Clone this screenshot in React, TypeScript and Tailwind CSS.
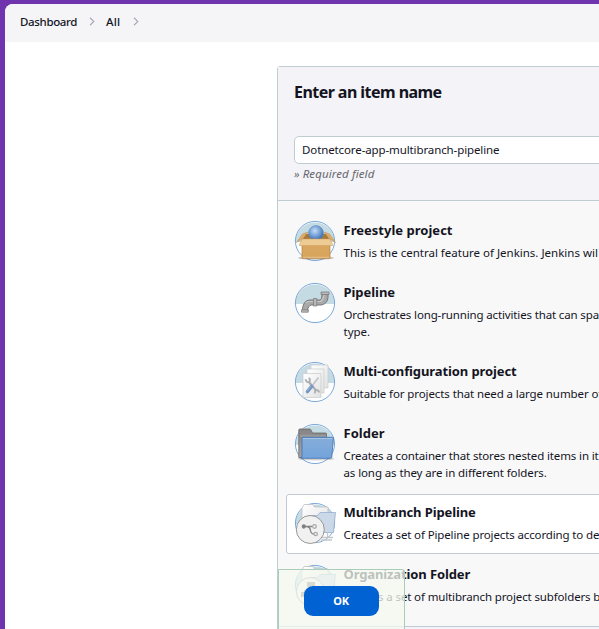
import React from "react";

function Disc({ id, children }: { id: string; children: React.ReactNode }) {
  return (
    <svg viewBox="0 0 40 40" className="size-10 shrink-0 overflow-visible">
      <defs>
        <linearGradient id={id + "box"} x1="0" y1="0" x2="0" y2="1">
          <stop offset="0" stopColor="#d9a762" />
          <stop offset="1" stopColor="#d9a55c" />
        </linearGradient>
        <radialGradient id={id + "ball"} cx=".42" cy=".35" r=".65">
          <stop offset="0" stopColor="#c5dcf5" />
          <stop offset=".5" stopColor="#7ba6da" />
          <stop offset="1" stopColor="#3d6cae" />
        </radialGradient>
        <linearGradient id={id + "blue"} x1="0" y1="0" x2="0" y2="1">
          <stop offset="0" stopColor="#86add9" />
          <stop offset="1" stopColor="#73a4dc" />
        </linearGradient>
        <linearGradient id={id + "grey"} x1="0" y1="0" x2="1" y2="1">
          <stop offset="0" stopColor="#ffffff" />
          <stop offset="1" stopColor="#e2e2e2" />
        </linearGradient>
        <linearGradient id={id + "dark"} x1="0" y1="0" x2="0" y2="1">
          <stop offset="0" stopColor="#858585" />
          <stop offset="1" stopColor="#a5a5a5" />
        </linearGradient>
      </defs>
      <circle cx="20" cy="20" r="19.6" fill="#fff" />
      <path d="M.4 21A19.6 19.6 0 1 1 39.6 21Z" fill="#c5dbe4" />
      <circle cx="20" cy="20" r="19.6" fill="none" stroke="#6d9fd5" strokeWidth=".9" />
      {children}
    </svg>
  );
}

function Freestyle() {
  return (
    <Disc id="f">
      <ellipse cx="21" cy="37" rx="18" ry="1.8" fill="#555" opacity=".3" />
      <path d="M7 19L11 13H31L35 19Z" fill="#a87838" />
      <path d="M7 18L13 11L7.500 13L1.500 21.500Z" fill="#dfac66" stroke="#c08c48" strokeWidth=".5" />
      <path d="M35 18L29 11L34.500 13L40.500 21.500Z" fill="#dfac66" stroke="#c08c48" strokeWidth=".5" />
      <circle cx="21" cy="12" r="7.5" fill="url(#fball)" stroke="#5a86bf" strokeWidth=".5" />
      <path d="M7 18.500H35V37.300H7Z" fill="url(#fbox)" stroke="#b88039" strokeWidth=".7" />
      <path d="M8 36.300H34" stroke="#efcf9c" strokeWidth=".7" />
      <path d="M7 18H35L38 24.500H4Z" fill="#efcb94" stroke="#cd9d5e" strokeWidth=".5" />
    </Disc>
  );
}

function Pipe() {
  return (
    <Disc id="p">
      <path d="M7.500 28V25.500Q8.500 17.500 14.500 17H25Q27 16.500 27 12V10.500H33V14.500Q32.500 20.500 26.500 22H16.500Q13 22.500 12.500 28Z" fill="#a9a9a9" stroke="#6e6e6e" strokeWidth=".9" />
      <path d="M11 19.500Q12.500 18.500 15 18.500H25Q28.500 17.500 28.800 12" fill="none" stroke="#c9c9c9" strokeWidth="1.200" />
      <path d="M18.500 15.500H21.800V23H18.500Z M26 9H34V11.500H26Z M6.500 26.800H13.300V29.200H6.500Z" fill="#b9b9b9" stroke="#747474" strokeWidth=".7" />
    </Disc>
  );
}

function Multi() {
  return (
    <Disc id="m">
      <g stroke="#c7cccd" strokeWidth=".7">
        <path d="M16 3H33V26H16Z" fill="url(#mgrey)" />
        <path d="M12 7H29V31H12Z" fill="url(#mgrey)" />
        <path d="M8 11.500H26V35.500H8Z" fill="url(#mgrey)" />
      </g>
      <path d="M13.500 19.500L21.500 29" stroke="#adb1b4" strokeWidth="2.4" />
      <path d="M10.500 17.200Q11.500 21 14 20Q16 18.500 14 15.800M20 31.500Q19.500 28 21.500 28Q23.500 28 24.300 30.500" fill="none" stroke="#adb1b4" strokeWidth="1.800" />
      <path d="M23.500 15.500L17 24" stroke="#c0c4c8" strokeWidth="1.700" />
      <path d="M16.500 24.500L12.500 29.500" stroke="#7396c6" strokeWidth="3.600" strokeLinecap="round" />
      <path d="M16 24L12 29" stroke="#a1bbdd" strokeWidth=".8" />
    </Disc>
  );
}

function FolderIcon() {
  return (
    <Disc id="d">
      <ellipse cx="21" cy="34.800" rx="18" ry="1.700" fill="#444" opacity=".25" />
      <path d="M3.800 33.500V6Q3.800 5 4.800 5H14.500Q15.500 5 16 6L17.500 9H30.500Q31.500 9 31.500 10V33.500Z" fill="url(#ddark)" stroke="#686868" strokeWidth=".8" />
      <path d="M5 12H31" stroke="#b4b4b4" strokeWidth=".7" />
      <path d="M7 14.300Q7 13.300 8 13.300H37.500Q38.500 13.300 38.400 14.300L36.800 33Q36.600 34.300 35.300 34.300H5.800Q7 33.800 7 32Z" fill="url(#dblue)" stroke="#3e70ae" strokeWidth=".8" />
      <path d="M8 14.500H37.300" stroke="#b4cfec" strokeWidth=".7" />
    </Disc>
  );
}

function Branch({ org = false }: { org?: boolean }) {
  const id = org ? "o" : "b";
  return (
    <Disc id={id}>
      <path d="M7 25V5L9 1.500H18L19.500 4H33V25Z" fill="url(#bgrey)" stroke="#babcbd" strokeWidth=".7" />
      <path d="M14 12.500H22.500L25 9.500H40.500L38.500 29.500H14Z" fill="#cbd8e7" stroke="#8da8c9" strokeWidth=".7" />
      <path d="M26 34.500H38M26 37H37M32.500 30V34" stroke="#c3c7c9" strokeWidth="1.300" />
      <circle cx="15.300" cy="26.500" r="14" fill="#f1f1f1" stroke="#8c8c8c" strokeWidth=".9" />
      {org ? (
        <g fill="#7d7d7d">
          <path d="M12 17H20V22H12Z M6 27H13V32H6Z M18 27H25V32H18Z" />
          <path d="M16 22V25M9.500 28V25H21.500V28" fill="none" stroke="#888" />
        </g>
      ) : (
        <g fill="none" stroke="#858585" strokeWidth="1.300">
          <path d="M9 23.500H17.500M12 23.500Q15 24 15.500 27.500Q16 31 19 31" />
          <circle cx="8.800" cy="23.500" r="1.500" fill="#777" />
          <circle cx="19.500" cy="23.500" r="1.800" stroke="#aaa" />
          <circle cx="20.700" cy="31" r="1.700" stroke="#aaa" />
        </g>
      )}
    </Disc>
  );
}

const items = [
  { title: "Freestyle project", t: "tracking-[0.02px]", icon: <Freestyle />, lines: [["This is the central feature of Jenkins. Jenkins wil", "tracking-normal"]] },
  { title: "Pipeline", t: "tracking-[-0.05px]", icon: <Pipe />, lines: [["Orchestrates long-running activities that can spa", "tracking-[-0.14px]"], ["type.", "tracking-normal"]] },
  { title: "Multi-configuration project", t: "tracking-[-0.1px]", icon: <Multi />, lines: [["Suitable for projects that need a large number of", "tracking-[-0.1px]"]] },
  { title: "Folder", t: "tracking-[0.03px]", icon: <FolderIcon />, lines: [["Creates a container that stores nested items in it", "tracking-[-0.13px]"], ["as long as they are in different folders.", "tracking-[-0.1px]"]] },
  { title: "Multibranch Pipeline", t: "tracking-[-0.12px]", icon: <Branch />, selected: true, lines: [["Creates a set of Pipeline projects according to de", "tracking-[-0.13px]"]] },
  { title: "Organization Folder", t: "tracking-[-0.12px]", icon: <Branch org />, lines: [["Creates a set of multibranch project subfolders b", "tracking-[-0.13px]"]] },
];

function Chevron() {
  return (
    <svg viewBox="0 0 6 10" className="h-[9px] w-[6px]" fill="none" stroke="#aaa9b8" strokeWidth="1.300">
      <path d="M.8 .8L5 5L.8 9.200" />
    </svg>
  );
}

export default function App() {
  return (
    <div className="relative h-[629px] w-[599px] overflow-hidden bg-[#7034ae] pt-1 pl-[5px] font-['Noto_Sans','Open_Sans',sans-serif] text-[#14141f]">
      <div className="h-full overflow-hidden rounded-tl-lg bg-white">
        <nav className="flex h-[38px] items-center bg-[#f5f5f8] pb-[3px] pl-[15px] text-[11.5px] font-medium">
          <span className="w-[69px] tracking-[-0.35px]">Dashboard</span>
          <Chevron />
          <span className="ml-[11px] w-[27px] tracking-[0.2px]">All</span>
          <Chevron />
        </nav>
        <main className="mt-[24px] ml-[272px] w-[420px] rounded-tl-[3px] border border-[#bfcdd2] bg-[#f8f8f8]">
          <header className="h-[134px] border-b border-[#bfcdd2] bg-[#f3f3f8] pt-[13px] pl-4 whitespace-nowrap">
            <h1 className="h-14 text-base leading-6 font-bold tracking-[-0.55px]">Enter an item name</h1>
            <div className="flex h-7 items-center rounded-[5px] border border-[#bfcdd2] bg-white pl-[7px] text-[11.5px] tracking-[-0.11px]">Dotnetcore-app-multibranch-pipeline</div>
            <p className="pt-[2px] text-[11.5px] leading-4 tracking-[0.1px] text-[#67676c] italic">» Required field</p>
          </header>
          <ul className="flex flex-col gap-[2px] pt-[11px] pb-[10px] pl-2 whitespace-nowrap">
            {items.map((item) => (
              <li key={item.title} className={`flex gap-[8.5px] rounded-[3px] border p-2 ${item.selected ? "border-[#bfcad4] bg-white" : "border-transparent"} ${item.lines.length > 1 ? "h-[77px]" : "h-[60px]"}`}>
                {item.icon}
                <div>
                  <h2 className={`h-[23px] text-[13px] leading-[18px] font-bold ${item.t}`}>{item.title}</h2>
                  {item.lines.map(([line, tracking]) => (
                    <p key={line} className={`text-[11.5px] leading-[17.25px] ${tracking}`}>{line}</p>
                  ))}
                </div>
              </li>
            ))}
          </ul>
          <div className="h-5 border-t border-[#bfcad4] bg-[#f3f3f8]" />
        </main>
      </div>
      <div className="absolute top-[569px] left-[278px] h-[70px] w-[127px] rounded-tr-[3px] border border-[#a9cdb8] bg-[#f4f9f0]/75 pt-4 pl-[25px]">
        <button className="block h-[30px] w-[75px] rounded-[9px] bg-[#0062d3] pr-px text-[11px] font-bold tracking-[-0.3px] text-white">OK</button>
      </div>
    </div>
  );
}
